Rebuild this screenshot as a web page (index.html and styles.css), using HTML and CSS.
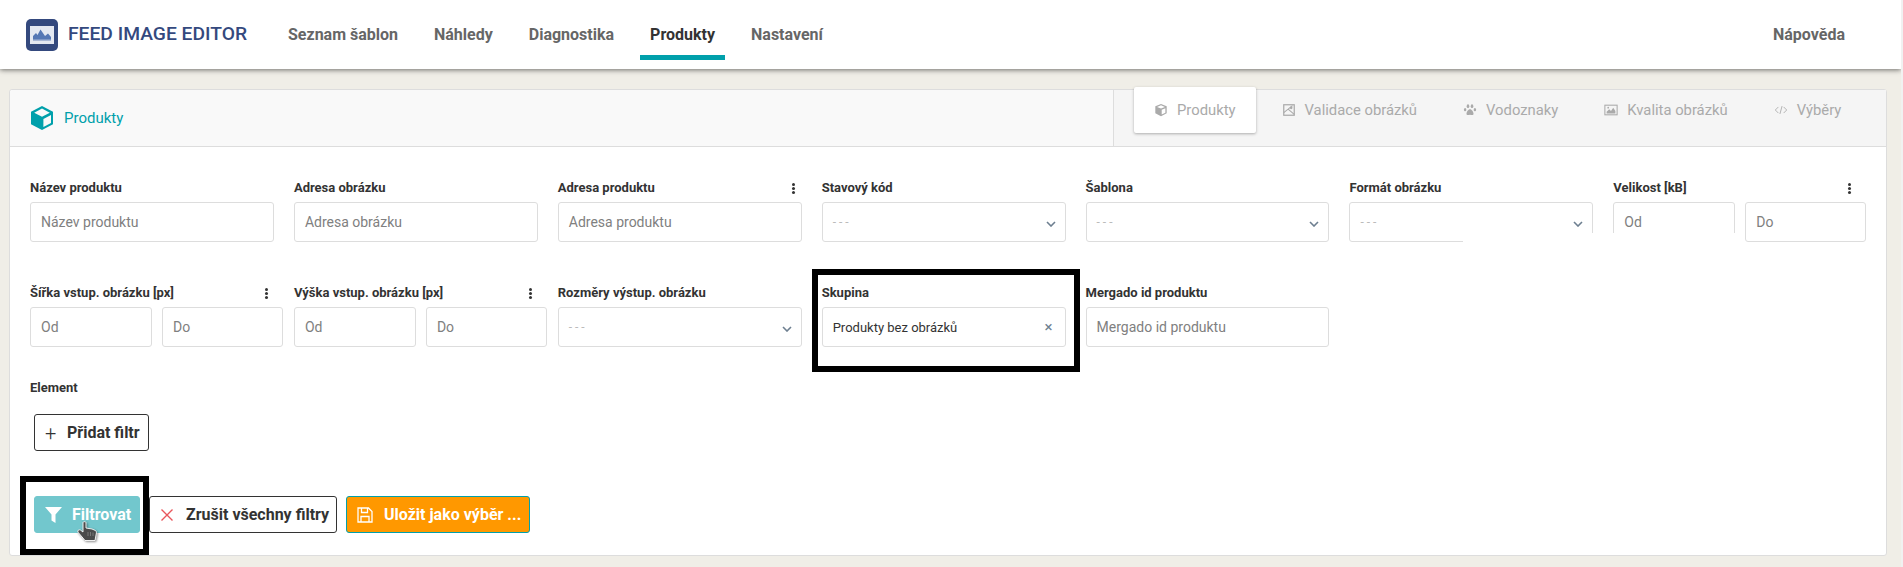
FILE: index.html
```html
<!DOCTYPE html>
<html lang="cs">
<head>
<meta charset="utf-8">
<title>Feed Image Editor</title>
<link rel="stylesheet" href="styles.css">
</head>
<body>
<div class="page">
  <header class="topbar">
    <div class="brand">
      <svg class="brand-icon" viewBox="0 0 32 32" aria-hidden="true">
        <rect width="32" height="32" rx="5" fill="#34497e"/>
        <rect x="4" y="7" width="24" height="18" fill="#e4e8f1"/>
        <path d="M7 22 V17 L10 14 L11.5 16 L14.5 10.5 L19 17 L22 14.5 L25 18 V22 Z" fill="#5577b4"/>
        <rect x="7" y="20.5" width="18" height="1.5" fill="#a9b8d6"/>
      </svg>
      <span class="brand-name">FEED IMAGE EDITOR</span>
    </div>
    <nav class="mainnav">
      <a class="navlink">Seznam šablon</a>
      <a class="navlink">Náhledy</a>
      <a class="navlink">Diagnostika</a>
      <a class="navlink is-active">Produkty</a>
      <a class="navlink">Nastavení</a>
    </nav>
    <a class="navlink help">Nápověda</a>
  </header>

  <main class="card">
    <div class="card-head">
      <div class="card-title">
        <svg class="title-icon" viewBox="0 0 24 24" aria-hidden="true">
          <path d="M12 0 L23 5.8 V18.2 L12 24 L1 18.2 V5.8 Z" fill="#00a0ab"/>
          <path d="M12 2.6 L19.8 6.7 L12 10.8 L4.2 6.7 Z" fill="#f9f9f9"/>
          <path d="M13.4 13 L21 9 V17 L13.4 21.1 Z" fill="#f9f9f9"/>
        </svg>
        <span>Produkty</span>
      </div>
      <div class="tabs">
        <a class="tab is-active">
          <svg class="tab-icon" viewBox="0 0 16 16" aria-hidden="true"><path d="M8 1 L14.5 3.8 V11.8 L8 15 L1.5 11.8 V3.8 Z" fill="#aaa"/><path d="M8 2.6 L12.5 4.5 L8 6.4 L3.5 4.5 Z" fill="#fff"/><path d="M8.8 7.6 L13 5.9 V11 L8.8 13.1 Z" fill="#fff"/></svg>
          Produkty
        </a>
        <a class="tab">
          <svg class="tab-icon" viewBox="0 0 16 16" aria-hidden="true"><rect x="2" y="2" width="12" height="12" fill="none" stroke="#aaa" stroke-width="1.4"/><path d="M2 11 L7 7 L14 13 M7 7 L12 3" fill="none" stroke="#aaa" stroke-width="1.2"/><circle cx="10.5" cy="5.5" r="1.5" fill="#aaa"/></svg>
          Validace obrázků
        </a>
        <a class="tab">
          <svg class="tab-icon" viewBox="0 0 16 16" aria-hidden="true"><g fill="#aaa"><ellipse cx="5.7" cy="3.6" rx="1.5" ry="2.1"/><ellipse cx="10.3" cy="3.6" rx="1.5" ry="2.1"/><ellipse cx="2.4" cy="7.6" rx="1.4" ry="1.9"/><ellipse cx="13.6" cy="7.6" rx="1.4" ry="1.9"/><path d="M8 7 C10 7 12 10 12 12.2 C12 14 10.5 14 8 13.4 C5.5 14 4 14 4 12.2 C4 10 6 7 8 7 Z"/></g></svg>
          Vodoznaky
        </a>
        <a class="tab">
          <svg class="tab-icon" viewBox="0 0 16 16" aria-hidden="true"><rect x="1" y="2.5" width="14" height="11" fill="#f5f5f5" stroke="#aaa" stroke-width="1.2"/><path d="M3 12 V10 L6 7 L8 9 L10.5 5.5 L13 9 V12 Z" fill="#aaa"/><circle cx="4.8" cy="5.3" r="1" fill="#aaa"/></svg>
          Kvalita obrázků
        </a>
        <a class="tab">
          <svg class="tab-icon" viewBox="0 0 16 16" aria-hidden="true"><path d="M5 4.5 L1.5 8 L5 11.5 M11 4.5 L14.5 8 L11 11.5 M9.2 3.5 L6.8 12.5" fill="none" stroke="#aaa" stroke-width="1"/></svg>
          Výběry
        </a>
      </div>
    </div>

    <section class="card-body">
      <div class="filters">
        <div class="field">
          <div class="label">Název produktu</div>
          <div class="input placeholder">Název produktu</div>
        </div>
        <div class="field">
          <div class="label">Adresa obrázku</div>
          <div class="input placeholder">Adresa obrázku</div>
        </div>
        <div class="field">
          <div class="label">Adresa produktu<span class="dots small"></span></div>
          <div class="input placeholder">Adresa produktu</div>
        </div>
        <div class="field">
          <div class="label">Stavový kód</div>
          <div class="input select"><span class="dash">- - -</span><svg class="chevron" viewBox="0 0 10 6" aria-hidden="true"><path d="M1 1 L5 5 L9 1" fill="none" stroke="#6d7f90" stroke-width="1.6"/></svg></div>
        </div>
        <div class="field">
          <div class="label">Šablona</div>
          <div class="input select"><span class="dash">- - -</span><svg class="chevron" viewBox="0 0 10 6" aria-hidden="true"><path d="M1 1 L5 5 L9 1" fill="none" stroke="#6d7f90" stroke-width="1.6"/></svg></div>
        </div>
        <div class="field">
          <div class="label">Formát obrázku</div>
          <div class="input select"><span class="dash">- - -</span><svg class="chevron" viewBox="0 0 10 6" aria-hidden="true"><path d="M1 1 L5 5 L9 1" fill="none" stroke="#6d7f90" stroke-width="1.6"/></svg></div>
        </div>
        <div class="field wide">
          <div class="label">Velikost [kB]<span class="dots"></span></div>
          <div class="range"><div class="input placeholder">Od</div><div class="input placeholder">Do</div></div>
        </div>

        <div class="field wide">
          <div class="label">Šířka vstup. obrázku [px]<span class="dots"></span></div>
          <div class="range"><div class="input placeholder">Od</div><div class="input placeholder">Do</div></div>
        </div>
        <div class="field wide">
          <div class="label">Výška vstup. obrázku [px]<span class="dots"></span></div>
          <div class="range"><div class="input placeholder">Od</div><div class="input placeholder">Do</div></div>
        </div>
        <div class="field">
          <div class="label">Rozměry výstup. obrázku</div>
          <div class="input select"><span class="dash">- - -</span><svg class="chevron" viewBox="0 0 10 6" aria-hidden="true"><path d="M1 1 L5 5 L9 1" fill="none" stroke="#6d7f90" stroke-width="1.6"/></svg></div>
        </div>
        <div class="field">
          <div class="label">Skupina</div>
          <div class="input select value">Produkty bez obrázků<span class="clear">×</span></div>
        </div>
        <div class="field">
          <div class="label">Mergado id produktu</div>
          <div class="input placeholder">Mergado id produktu</div>
        </div>
      </div>

      <div class="element">
        <div class="label">Element</div>
        <button class="btn btn-add"><span class="plus">+</span>Přidat filtr</button>
      </div>

      <div class="actions">
        <button class="btn btn-filter">
          <svg class="btn-icon" viewBox="0 0 17 16" aria-hidden="true"><path d="M0 0 H17 L10.5 7.5 V16 L6.5 13.5 V7.5 Z" fill="#fff"/></svg>
          Filtrovat
        </button>
        <button class="btn btn-clear">
          <svg class="btn-icon" viewBox="0 0 12 12" aria-hidden="true"><path d="M.5 .5 L11.5 11.5 M11.5 .5 L.5 11.5" stroke="#e9565c" stroke-width="1.4" fill="none"/></svg>
          Zrušit všechny filtry
        </button>
        <button class="btn btn-save">
          <svg class="btn-icon" viewBox="0 0 16 16" aria-hidden="true"><path d="M1 1 H11.5 L15 4.5 V15 H1 Z M4.5 1 V5.5 H10.5 V1 M4 15 V9.5 H12 V15" fill="none" stroke="#fff" stroke-width="1.3"/></svg>
          Uložit jako výběr ...
        </button>
      </div>
    </section>
  </main>

  <div class="mark mark-group"></div>
  <div class="mark mark-filter"></div>
  <div class="patch"></div>
  <svg class="cursor" viewBox="0 0 20 21" aria-hidden="true">
    <path d="M6 1.6 C6 .4 9 .4 9 1.6 V7 L12 7.5 L15 8 L18.2 9.4 C19.3 9.9 19.5 11 19.4 12 L18 19.5 H8 L1 11.2 C0 9.6 2 8.1 3.5 9.1 L6 11 Z" fill="#4a4a4a" stroke="#fff" stroke-width=".9"/>
    <path d="M11 11 V15 M13.5 11 V15 M16 11.5 V15" stroke="#8c8c8c" stroke-width=".7" fill="none"/>
  </svg>
</div>
</body>
</html>
```
FILE: styles.css
```css
* { box-sizing: border-box; }
html, body { margin: 0; padding: 0; }
body {
  height: 567px;
  overflow: hidden;
  background: #f1f1f1;
  font-family: Roboto, "Liberation Sans", sans-serif;
}
.page {
  position: relative;
  width: 1901px;
  height: 567px;
  background: #f0eee7;
  overflow: hidden;
}

/* top bar */
.topbar {
  display: flex;
  align-items: flex-start;
  height: 69px;
  padding: 19px 0 0 26px;
  background: #fff;
  box-shadow: 0 1px 5px rgba(0, 0, 0, .55);
}
.brand { display: flex; align-items: flex-start; gap: 10px; width: 252px; flex: none; }
.brand-icon { width: 32px; height: 32px; display: block; flex: none; }
.brand-name {
  color: #34497e;
  font-size: 19.25px;
  font-weight: 500;
  line-height: 19px;
  margin-top: 5px;
  white-space: nowrap;
}
.mainnav { display: flex; gap: 16px; }
.navlink {
  display: block;
  height: 41px;
  padding: 7px 10px 0;
  color: #666;
  font-size: 16px;
  font-weight: 700;
  line-height: 18px;
  white-space: nowrap;
}
.navlink.is-active { color: #333; border-bottom: 5px solid #00a0ab; }
.help { margin-left: auto; margin-right: 46px; }

/* card */
.card {
  width: 1878px;
  height: 467px;
  margin: 20px 0 0 9px;
  background: #fff;
  border: 1px solid #ddd;
  border-radius: 3px;
}
.card-head {
  display: flex;
  justify-content: space-between;
  height: 57px;
  background: #f9f9f9;
  border-bottom: 1px solid #ddd;
  border-radius: 3px 3px 0 0;
}
.card-title {
  display: flex;
  align-items: center;
  gap: 10px;
  padding: 0 0 1px 20px;
  color: #00a0ab;
  font-size: 15px;
}
.title-icon { width: 24px; height: 24px; display: block; }
.tabs {
  display: flex;
  align-items: flex-start;
  width: 773px;
  padding-left: 20px;
  background: #f5f5f5;
  border-left: 1px solid #ddd;
}
.tab {
  display: flex;
  align-items: center;
  gap: 9px;
  height: 40px;
  padding: 0 20px;
  color: #aaa;
  font-size: 14.8px;
  white-space: nowrap;
  margin-right: 6px;
}
.tab.is-active {
  height: 46px;
  background: #fff;
  border-radius: 2px;
  box-shadow: 0 1px 3px rgba(0, 0, 0, .3);
  margin-top: -3px;
}
.tab-icon { width: 14px; height: 14px; display: block; flex: none; }

/* form */
.card-body { padding: 0 20px; }
.filters {
  display: grid;
  grid-template-columns: repeat(6, 243.9px) 253px;
  column-gap: 20px;
  grid-template-rows: 105px 95px;
  padding-top: 33px;
}
.field { min-width: 0; }
.field.wide { width: 253px; }
.label {
  position: relative;
  height: 22px;
  color: #333;
  font-size: 13px;
  font-weight: 700;
  line-height: 16px;
  white-space: nowrap;
}
.dots {
  position: absolute;
  right: 15px;
  top: 3px;
  width: 3px;
  height: 3px;
  border-radius: 50%;
  background: #333;
  box-shadow: 0 4px 0 #333, 0 8px 0 #333;
}
.dots.small { right: 7px; }
.input {
  display: flex;
  align-items: center;
  width: 100%;
  height: 40px;
  padding: 0 10px;
  background: #fff;
  border: 1px solid #ddd;
  border-radius: 3px;
  font-size: 14px;
}
.placeholder { color: #808080; }
.select { justify-content: space-between; padding: 0 9px 0 10px; }
.dash { color: #bbb; font-size: 12px; }
.chevron { width: 10px; height: 6px; display: block; margin-top: 3px; }
.value { color: #333; font-size: 13px; padding-right: 12px; }
.clear { color: #6d7f90; font-size: 15px; }
.range { display: grid; grid-template-columns: 122px 121px; column-gap: 10px; }

/* buttons */
.element .label { height: 34px; }
.btn {
  display: inline-flex;
  align-items: center;
  height: 37px;
  padding: 0;
  border: 1px solid #333;
  border-radius: 3px;
  background: #fff;
  color: #333;
  font-family: inherit;
  font-size: 16px;
  font-weight: 700;
  white-space: nowrap;
}
.btn-add { width: 115px; margin-left: 4px; padding-left: 10px; }
.plus { font-size: 20px; font-weight: 300; width: 22px; text-align: left; }
.actions { display: flex; gap: 9px; margin-top: 45px; margin-left: 4px; }
.btn-icon { display: block; flex: none; }
.btn-filter {
  width: 106px;
  gap: 10px;
  padding-left: 10px;
  background: #72c7cd;
  border-color: #72c7cd;
  color: #fff;
}
.btn-filter .btn-icon { width: 17px; height: 16px; }
.btn-clear { width: 188px; gap: 13px; padding-left: 11px; }
.btn-clear .btn-icon { width: 12px; height: 12px; }
.btn-save {
  width: 184px;
  gap: 11px;
  padding-left: 10px;
  background: #ff9800;
  border-color: #00a0ab;
  color: #fff;
}
.btn-save .btn-icon { width: 16px; height: 16px; }

/* overlays */
.mark { position: absolute; border: 6px solid #000; background: transparent; }
.mark-group { left: 812px; top: 269px; width: 268px; height: 103px; }
.mark-filter { left: 20px; top: 476px; width: 129px; height: 79px; }
.patch { position: absolute; left: 1463px; top: 233px; width: 279px; height: 11px; background: #fff; }
.cursor {
  position: absolute;
  left: 77px;
  top: 521px;
  width: 20px;
  height: 21px;
  filter: drop-shadow(1px 1px 1px rgba(0, 0, 0, .45));
}
```
